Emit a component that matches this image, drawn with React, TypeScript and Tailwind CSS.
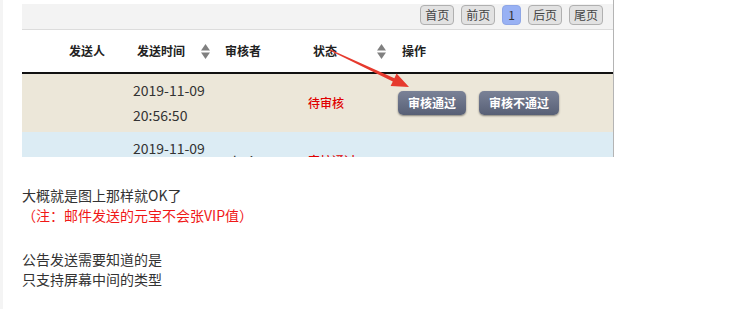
import React from 'react';

const PAGES = ['首页', '前页', '1', '后页', '尾页'];

function SortIcon() {
  return (
    <svg width="9" height="15" viewBox="0 0 9 15" className="shrink-0">
      <polygon points="4.5,0 9,6.5 0,6.5" fill="#808080" />
      <polygon points="0,8.5 9,8.5 4.5,15" fill="#808080" />
    </svg>
  );
}

function ActionButton({ label, width }: { label: string; width: string }) {
  return (
    <button
      className={`${width} h-[24px] rounded-[5px] bg-gradient-to-b from-[#7a8297] to-[#586076] text-[12px] font-bold leading-[24px] text-white shadow-[0_1px_2px_rgba(0,0,0,0.45)]`}
    >
      {label}
    </button>
  );
}

export default function App() {
  return (
    <div className="min-h-[309px] border-l-[3px] border-[#f4f4f4] bg-white pl-[19px] font-['Noto_Sans_CJK_SC',sans-serif] text-[#333]">
      {/* Screenshot of the audit table */}
      <div className="relative h-[157px] w-[592px] overflow-hidden border-r border-[#b4b4b4]">
        {/* Pagination bar */}
        <div className="mt-[4px] flex h-[26px] items-start justify-end gap-[7px] border-b border-[#dcdcdc] bg-[#f3f3f3] pr-[10px] pt-[1px]">
          {PAGES.map((p) => (
            <span
              key={p}
              className={`h-[20px] rounded-[4px] border px-[4px] text-[12px] leading-[18px] ${
                p === '1'
                  ? 'border-[#8ea6e6] bg-[#98b1f4] px-[5px] text-[#333]'
                  : 'border-[#b0b0b0] bg-[#e2e2e2] text-[#444]'
              }`}
            >
              {p}
            </span>
          ))}
        </div>

        {/* Header */}
        <div className="flex h-[44px] items-center border-b-2 border-[#111] text-[12px] font-bold text-[#222]">
          <div className="w-[47px]" />
          <div className="w-[64px]">发送人</div>
          <div className="flex w-[87px] items-center pl-[4px]">
            <span>发送时间</span>
            <span className="ml-[16px]"><SortIcon /></span>
          </div>
          <div className="w-[88px] pl-[5px]">审核者</div>
          <div className="flex w-[90px] items-center pl-[5px]">
            <span>状态</span>
            <span className="ml-[40px]"><SortIcon /></span>
          </div>
          <div className="pl-[4px]">操作</div>
        </div>

        {/* Row 1 */}
        <div className="flex h-[58px] items-center bg-[#ece7d9]">
          <div className="w-[111px]" />
          <div className="w-[87px] text-[14px] leading-[25px] text-[#333]">
            <div>2019-11-09</div>
            <div>20:56:50</div>
          </div>
          <div className="w-[88px]" />
          <div className="w-[90px] text-[12px] font-medium text-[#e00000]">待审核</div>
          <div className="flex gap-[13px]">
            <ActionButton label="审核通过" width="w-[68px]" />
            <ActionButton label="审核不通过" width="w-[80px]" />
          </div>
        </div>

        {/* Row 2 */}
        <div className="flex h-[58px] items-center bg-[#dcecf4]">
          <div className="w-[111px]" />
          <div className="w-[87px] text-[14px] leading-[25px] text-[#333]">
            <div>2019-11-09</div>
            <div>20:58:12</div>
          </div>
          <div className="w-[88px] text-[14px] text-[#333]">admin</div>
          <div className="w-[90px] text-[12px] font-medium text-[#e00000]">审核通过</div>
        </div>

        {/* Red annotation arrow */}
        <svg className="pointer-events-none absolute left-0 top-0" width="592" height="157">
          <polygon
            points="308.3,49.5 372.4,78.2 374.6,73.5 387,87 368.6,86.1 370.8,81.4 307.7,50.5"
            fill="#e63a2e"
          />
        </svg>
      </div>

      {/* Notes */}
      <div className="mt-[28px] text-[14px] leading-[20px]">
        <p>大概就是图上那样就OK了</p>
        <p className="text-[#f01818]">（注：邮件发送的元宝不会张VIP值）</p>
        <p className="mt-[24px]">公告发送需要知道的是</p>
        <p>只支持屏幕中间的类型</p>
      </div>
    </div>
  );
}
